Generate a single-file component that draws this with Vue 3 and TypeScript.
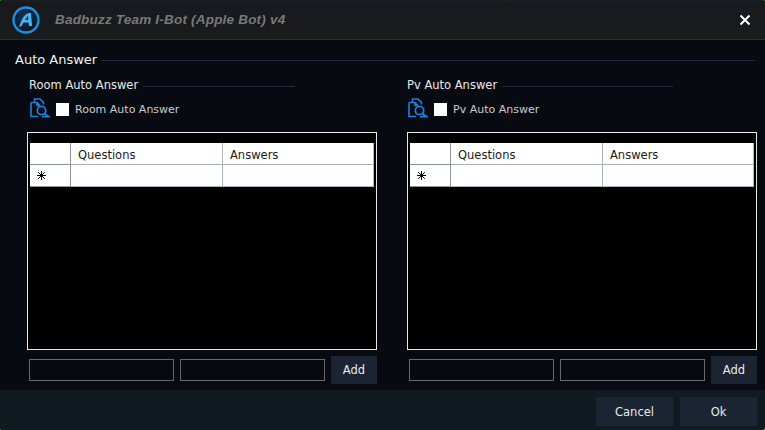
<script setup lang="ts">
const panels = [
  { title: 'Room Auto Answer', key: 'room' },
  { title: 'Pv Auto Answer', key: 'pv' },
];
</script>

<template>
  <div class="window">
    <header class="titlebar">
      <svg class="logo" width="30" height="30" viewBox="0 0 30 30" aria-hidden="true">
        <defs>
          <radialGradient id="logoFill" cx="50%" cy="40%" r="60%">
            <stop offset="0%" stop-color="#0f3a60" />
            <stop offset="100%" stop-color="#08141f" />
          </radialGradient>
        </defs>
        <circle cx="15" cy="15" r="12.5" fill="url(#logoFill)" stroke="#1c8fe0" stroke-width="2.4" />
        <path d="M8 22 Q12 9 18 8 L20 8 L21 21 L18 21 L17.6 17.5 L12.5 17.5 L10.5 21 Z M14 15 L17.4 15 L17 10.5 Z" fill="#4fb4ee" fill-rule="evenodd" />
      </svg>
      <span class="title">Badbuzz Team I-Bot (Apple Bot) v4</span>
      <svg class="close" width="12" height="12" viewBox="0 0 12 12" aria-hidden="true">
        <path d="M1.5 1.5 L10.5 10.5 M10.5 1.5 L1.5 10.5" stroke="#fff" stroke-width="2" />
      </svg>
    </header>

    <main class="content">
      <div class="legend main-legend">
        <span>Auto Answer</span>
        <i></i>
      </div>
      <div class="panels">
        <section v-for="panel in panels" :key="panel.key" class="panel" :class="panel.key">
          <div class="legend sub-legend">
            <span>{{ panel.title }}</span>
            <i></i>
          </div>
          <div class="check-row">
            <svg class="find-icon" width="20" height="20" viewBox="0 0 20 20" fill="none" stroke="#1f7fe0" stroke-width="1.6" aria-hidden="true">
              <path d="M4.5 4 V1 H10 L13.5 4.5 V6.5" />
              <path d="M1 4.5 H7 L10 7.5 M7 4.5 V7.5 H10" />
              <path d="M1 4.5 V18.5 H8" />
              <circle cx="11.5" cy="12.5" r="4.2" stroke-width="1.8" />
              <path d="M14.5 15.5 L18 18.5 M12 18.7 H20" stroke-width="1.7" />
            </svg>
            <span class="checkbox"></span>
            <span class="check-label">{{ panel.title }}</span>
          </div>
          <div class="grid-frame">
            <div class="grid">
              <div class="cell head corner"></div>
              <div class="cell head">Questions</div>
              <div class="cell head">Answers</div>
              <div class="cell corner star">
                <svg width="9" height="9" viewBox="0 0 9 9" stroke="#000" stroke-width="1" aria-hidden="true">
                  <path d="M4.5 0 V9 M0 4.5 H9 M1.2 1.2 L7.8 7.8 M7.8 1.2 L1.2 7.8" />
                </svg>
              </div>
              <div class="cell"></div>
              <div class="cell"></div>
            </div>
          </div>
          <div class="add-row">
            <input class="field" type="text" />
            <input class="field" type="text" />
            <button type="button" class="btn add">Add</button>
          </div>
        </section>
      </div>
    </main>

    <footer class="footer">
      <button type="button" class="btn action">Cancel</button>
      <button type="button" class="btn action">Ok</button>
    </footer>
  </div>
</template>

<style>
html,
body {
  margin: 0;
}

html {
  background: linear-gradient(135deg, #4d8a3c 90%, #d6cf7a 100%);
}
</style>

<style scoped>
.window {
  width: 765px;
  height: 430px;
  display: flex;
  flex-direction: column;
  overflow: hidden;
  border-radius: 3px;
  background: #070a10;
  color: #e8ebee;
  font-family: "DejaVu Sans", sans-serif;
  font-size: 11.5px;
}

.titlebar {
  height: 40px;
  flex: none;
  display: flex;
  align-items: center;
  padding: 0 14px 0 11px;
  box-sizing: border-box;
  background: linear-gradient(#1b2026 0, #17191c 3px, #1a1b1d 100%);
  border-bottom: 1px solid #2a2f35;
}

.logo {
  flex: none;
  margin-right: 14px;
}

.title {
  flex: 1;
  font-family: "Liberation Sans", sans-serif;
  font-size: 13.5px;
  font-style: italic;
  font-weight: 700;
  letter-spacing: 0.2px;
  color: #77797b;
}

.close {
  flex: none;
}

.content {
  flex: 1;
  min-height: 0;
  padding: 10px 10px 0 15px;
}

.legend {
  display: flex;
  align-items: center;
  gap: 5px;
}

.legend i {
  flex: 1;
  height: 1px;
  margin-top: 3px;
  background: #1f2a3f;
}

.main-legend {
  font-size: 13px;
  height: 18px;
  color: #f0f2f4;
}

.panels {
  display: grid;
  grid-template-columns: 350px 350px;
  gap: 30px;
  margin: 9px 0 0 12px;
}

.panel {
  min-width: 0;
}

.sub-legend {
  margin-left: 2px;
  width: 266px;
  height: 16px;
}

.pv .sub-legend,
.pv .check-row {
  margin-left: 0;
}

.check-row {
  display: flex;
  align-items: center;
  height: 23px;
  margin: 5px 0 0 2px;
}

.find-icon {
  flex: none;
  align-self: flex-start;
  margin-left: 1px;
}

.checkbox {
  width: 13px;
  height: 13px;
  margin-left: 6px;
  background: #fff;
}

.check-label {
  margin-left: 6px;
  font-size: 11px;
  color: #c9ccd0;
}

.grid-frame {
  height: 218px;
  margin-top: 11px;
  box-sizing: border-box;
  padding: 10px 2px 0;
  background: #000;
  border: 1px solid #e6e8ea;
}

.grid {
  display: grid;
  grid-template-columns: 41px 152px 151px;
  grid-auto-rows: 22px;
  background: #fff;
  color: #1a1a1a;
}

.cell {
  box-sizing: border-box;
  border-right: 1px solid #aab4c0;
  border-bottom: 1px solid #aab4c0;
  padding: 1px 0 0 7px;
  line-height: 23px;
}

.corner {
  border-right-color: #8f9499;
  border-bottom-color: #8f9499;
}

.star {
  display: flex;
  align-items: center;
  padding: 0 0 0 7px;
}

.add-row {
  display: flex;
  align-items: center;
  height: 28px;
  margin-top: 6px;
  padding-left: 2px;
}

.field {
  width: 145px;
  height: 22px;
  box-sizing: border-box;
  margin: 0 6px 0 0;
  padding: 0;
  background: #070a12;
  border: 1px solid #67696c;
  outline: none;
}

.btn {
  border: none;
  padding: 0;
  background: #1a2432;
  color: #e8ebee;
  font-family: inherit;
  font-size: 11.5px;
}

.add {
  width: 46px;
  height: 28px;
}

.footer {
  flex: none;
  height: 40px;
  display: flex;
  justify-content: flex-end;
  gap: 7px;
  box-sizing: border-box;
  padding: 7px 8px 4px 0;
  background: #111a20;
}

.action {
  width: 77px;
  height: 29px;
}
</style>
